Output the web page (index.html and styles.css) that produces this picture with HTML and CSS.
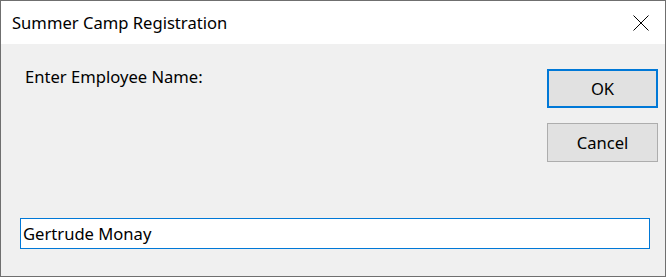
FILE: index.html
```html
<!DOCTYPE html>
<html lang="en">
<head>
    <meta charset="UTF-8">
    <title>Summer Camp Registration</title>
    <link rel="stylesheet" href="styles.css">
</head>
<body>
    <div class="dialog">
        <div class="title-bar">
            <span class="title">Summer Camp Registration</span>
            <button class="close-button" aria-label="Close">
                <svg width="16" height="16" viewBox="0 0 16 16">
                    <path d="M0.5 0.5 L15.5 15.5 M15.5 0.5 L0.5 15.5" stroke="#000" stroke-width="1" fill="none"/>
                </svg>
            </button>
        </div>
        <div class="content">
            <div class="top-row">
                <label class="prompt" for="employeeName">Enter Employee Name:</label>
                <div class="buttons">
                    <button class="dialog-button default">OK</button>
                    <button class="dialog-button">Cancel</button>
                </div>
            </div>
            <input id="employeeName" class="name-input" type="text" value="Gertrude Monay">
        </div>
    </div>
</body>
</html>
```

FILE: styles.css
```css
html, body {
    margin: 0;
    padding: 0;
}
body {
    font-family: "Noto Sans", "Open Sans", sans-serif;
    color: #000;
}
.dialog {
    width: 666px;
    height: 277px;
    box-sizing: border-box;
    border: 1px solid #6f6f6f;
    display: flex;
    flex-direction: column;
}
.title-bar {
    height: 43px;
    background-color: #fff;
    display: flex;
    align-items: center;
    justify-content: space-between;
    padding-left: 11px;
}
.title {
    font-size: 16.6px;
    margin-top: -1px;
}
.close-button {
    width: 46px;
    height: 43px;
    border: none;
    background: none;
    padding: 0;
    margin-right: 1px;
    display: flex;
    align-items: center;
    justify-content: center;
}
.content {
    flex: 1;
    background-color: #f0f0f0;
    padding: 25px 7px 0 19px;
    display: flex;
    flex-direction: column;
}
.top-row {
    display: flex;
    justify-content: space-between;
}
.prompt {
    font-size: 16.6px;
    margin-left: 5px;
    margin-top: -4px;
}
.buttons {
    display: flex;
    flex-direction: column;
    gap: 15px;
}
.dialog-button {
    width: 111px;
    height: 39px;
    box-sizing: border-box;
    background-color: #e1e1e1;
    border: 1px solid #adadad;
    font-family: "Noto Sans", "Open Sans", sans-serif;
    font-size: 16.6px;
    color: #000;
    padding: 0;
}
.dialog-button.default {
    border: 2px solid #0078d7;
}
.name-input {
    margin-top: auto;
    margin-bottom: 27px;
    margin-right: 8px;
    height: 31px;
    box-sizing: border-box;
    border: 1px solid #0078d7;
    background-color: #fff;
    font-family: "Noto Sans", "Open Sans", sans-serif;
    font-size: 16.6px;
    padding: 0 2px;
    outline: none;
}
```
